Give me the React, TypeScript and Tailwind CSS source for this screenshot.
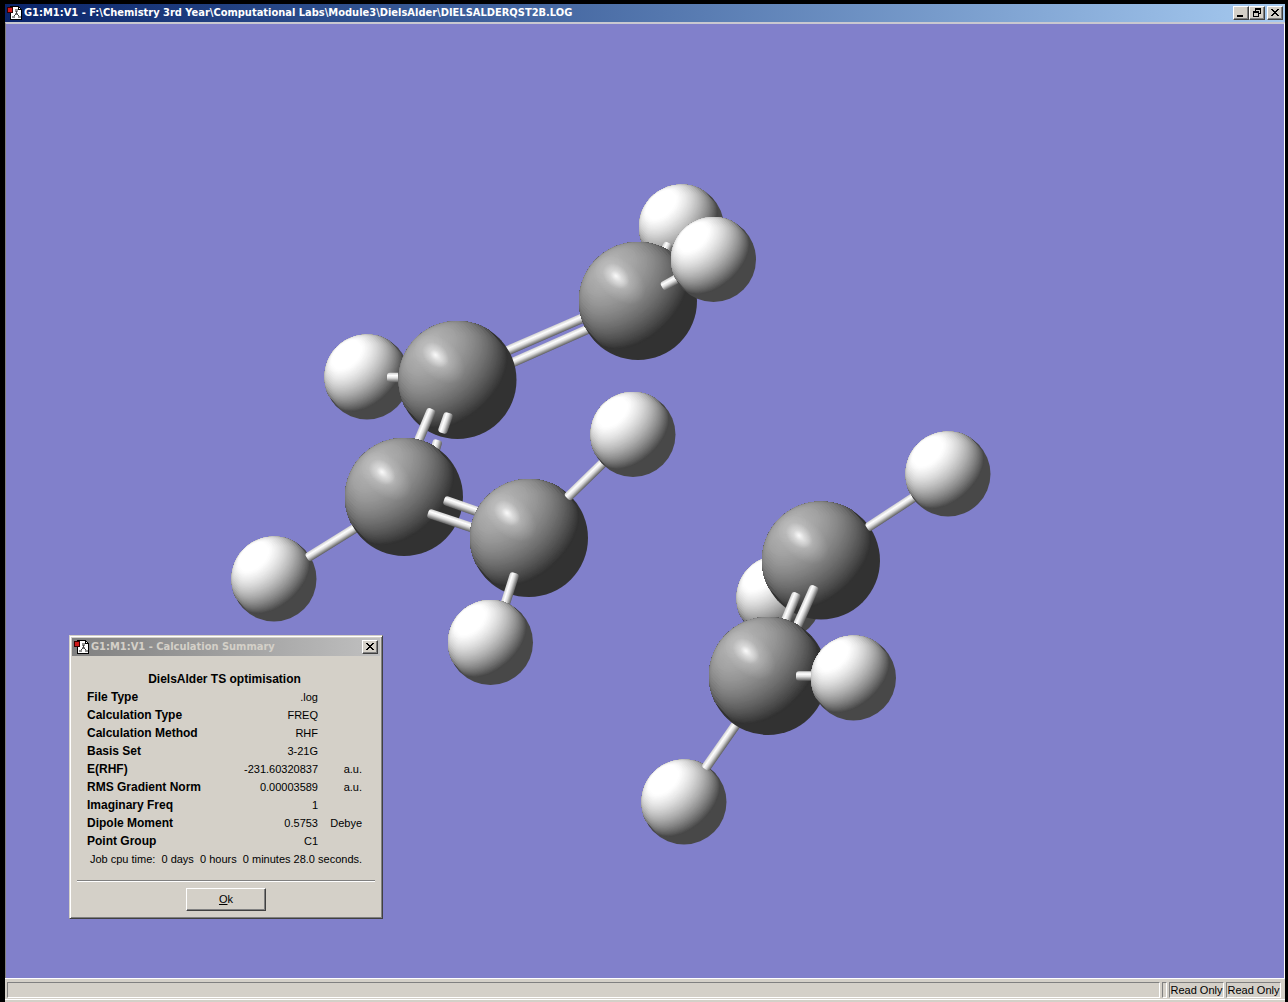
const results = [
  { label: "File Type", value: ".log", unit: "" },
  { label: "Calculation Type", value: "FREQ", unit: "" },
  { label: "Calculation Method", value: "RHF", unit: "" },
  { label: "Basis Set", value: "3-21G", unit: "" },
  { label: "E(RHF)", value: "-231.60320837", unit: "a.u." },
  { label: "RMS Gradient Norm", value: "0.00003589", unit: "a.u." },
  { label: "Imaginary Freq", value: "1", unit: "" },
  { label: "Dipole Moment", value: "0.5753", unit: "Debye" },
  { label: "Point Group", value: "C1", unit: "" },
];

// Unit vector pointing at the light: sideways and towards the viewer
const LIGHT_SIDE = 0.78;
const LIGHT_FRONT = 0.62;
const LEVELS = 60;

// Outline of the part of a unit sphere that is lit at least as much as `level`
const litArea = (level: number) => {
  const near: string[] = [];
  const far: string[] = [];
  for (let v = -1; v <= 1.0001; v += 0.04) {
    const half = Math.sqrt(Math.max(0, 1 - v * v));
    let first: number | null = null;
    let last = 0;
    for (let i = 0; i <= 200; i++) {
      const u = -half + (2 * half * i) / 200;
      const depth = Math.sqrt(Math.max(0, half * half - u * u));
      if (u * LIGHT_SIDE + depth * LIGHT_FRONT >= level) {
        if (first === null) first = u;
        last = u;
      }
    }
    if (first === null) continue;
    near.push(`${first.toFixed(3)},${v.toFixed(3)}`);
    far.unshift(`${last.toFixed(3)},${v.toFixed(3)}`);
  }
  return [...near, ...far].join(" ");
};

const areas = Array.from({ length: LEVELS }, (_, i) => ({
  level: i / LEVELS,
  points: litArea(i / LEVELS),
}));

const Ball = ({ id, ambient, diffuse }: { id: string; ambient: number; diffuse: number }) => (
  <g id={id}>
    <circle r="1" fill={`rgb(${ambient},${ambient},${ambient})`} />
    <g transform="rotate(-132.5)">
      {areas.map(({ level, points }) => {
        const tone = Math.min(255, Math.round(ambient + diffuse * level));
        return <polygon key={level} points={points} fill={`rgb(${tone},${tone},${tone})`} />;
      })}
    </g>
  </g>
);

const Carbon = ({ x, y }: { x: number; y: number }) => (
  <g transform={`translate(${x} ${y})`}>
    <use href="#carbon" transform="scale(59)" />
    <ellipse cx="-18" cy="-21" rx="30" ry="19" fill="url(#shine)" transform="rotate(42 -18 -21)" opacity="0.5" />
    <ellipse cx="-22" cy="-25" rx="15" ry="11" fill="url(#shine)" transform="rotate(42 -22 -25)" />
  </g>
);

const Hydrogen = ({ x, y }: { x: number; y: number }) => (
  <use href="#hydrogen" transform={`translate(${x} ${y}) scale(42.5)`} />
);

const Bond = ({ from, to }: { from: [number, number]; to: [number, number] }) => {
  const dx = to[0] - from[0];
  const dy = to[1] - from[1];
  const angle = (Math.atan2(dy, dx) * 180) / Math.PI;
  return (
    <rect
      x="0"
      y="-4.75"
      width={Math.hypot(dx, dy)}
      height="9.5"
      rx="3"
      fill="url(#rod)"
      transform={`translate(${from[0]} ${from[1]}) rotate(${angle})`}
    />
  );
};

const Molecule = () => (
  <svg
    viewBox="6 24 1278 954"
    preserveAspectRatio="xMinYMin meet"
    className="block h-full w-full"
    role="img"
    aria-label="Diels-Alder transition state"
  >
    <defs>
      <Ball id="carbon" ambient={50} diffuse={130} />
      <Ball id="hydrogen" ambient={72} diffuse={205} />
      <radialGradient id="shine">
        <stop offset="0" stopColor="#fff" stopOpacity="0.9" />
        <stop offset="0.4" stopColor="#fff" stopOpacity="0.38" />
        <stop offset="1" stopColor="#fff" stopOpacity="0" />
      </radialGradient>
      <linearGradient id="rod" x1="0" y1="0" x2="0" y2="1">
        <stop offset="0" stopColor="#d0d0d0" />
        <stop offset="0.3" stopColor="#fff" />
        <stop offset="0.55" stopColor="#dcdcdc" />
        <stop offset="1" stopColor="#5c5c5c" />
      </linearGradient>
    </defs>

    <Bond from={[500, 354]} to={[590, 315]} />
    <Bond from={[505, 366]} to={[595, 326]} />
    <Hydrogen x={681.5} y={227} />
    <Bond from={[662, 257]} to={[669, 243]} />
    <Carbon x={638} y={301} />
    <Bond from={[662, 287]} to={[682, 276]} />
    <Hydrogen x={713.5} y={259.5} />

    <Hydrogen x={367} y={377} />
    <Bond from={[387, 377.5]} to={[410, 377.5]} />
    <Carbon x={457.5} y={380} />
    <Bond from={[415, 449]} to={[432, 409]} />
    <Bond from={[442, 433]} to={[449, 413]} />
    <Bond from={[434, 454]} to={[438, 440]} />
    <Hydrogen x={274} y={579} />
    <Bond from={[307, 558]} to={[362, 524]} />
    <Carbon x={404} y={497} />
    <Bond from={[444, 500]} to={[490, 516]} />
    <Bond from={[428, 513]} to={[485, 532]} />
    <Carbon x={529} y={538} />
    <Bond from={[567, 498]} to={[608, 458]} />
    <Hydrogen x={633} y={434.5} />
    <Bond from={[503, 611]} to={[515, 573]} />
    <Hydrogen x={490.5} y={642.5} />

    <Hydrogen x={779} y={598} />
    <Carbon x={821} y={560.5} />
    <Bond from={[867, 528]} to={[922, 492]} />
    <Hydrogen x={948} y={474} />
    <Bond from={[783, 627]} to={[797, 593]} />
    <Bond from={[795, 631]} to={[815, 586]} />
    <Hydrogen x={684} y={802} />
    <Bond from={[705, 769]} to={[742, 716]} />
    <Carbon x={768} y={676} />
    <Bond from={[796, 676]} to={[820, 676]} />
    <Hydrogen x={853.5} y={678} />
  </svg>
);

const AppIcon = () => (
  <svg viewBox="0 0 16 16" className="h-4 w-4 shrink-0" shapeRendering="crispEdges" aria-hidden="true">
    <path d="M3 1h9v1h1v1h1v1h1v11H3z" fill="#000" />
    <path d="M4 2h7v3h3v9H4z" fill="#fff" />
    <path d="M12 3h1v1h-1z" fill="#fff" />
    <path d="M8 4h3v3H8zM8 8h3v2H8zM5 11h3v2H5zM11 11h3v2h-3z" fill="#909090" />
    <path d="M9 6h1v3H9zM8 9h1v1H8zM7 10h1v1H7zM10 9h1v1h-1zM11 10h1v1h-1z" fill="#404040" />
    <path d="M0 2h6v6H0z" fill="#300" />
    <path d="M1 3h4v4H1z" fill="#d01818" />
  </svg>
);

const bevel =
  "border border-t-white border-l-white border-b-[#404040] border-r-[#404040] shadow-[inset_-1px_-1px_0_#808080]";

const sunken = "border border-t-[#808080] border-r-white border-b-white border-l-[#808080]";

const CaptionButton = ({ label, path }: { label: string; path: string }) => (
  <button type="button" aria-label={label} className={`flex h-[14px] w-4 items-center justify-center bg-[#d4d0c8] ${bevel}`}>
    <svg viewBox="0 0 14 12" className="h-3 w-[14px] shrink-0" shapeRendering="crispEdges" aria-hidden="true">
      <path d={path} fill="#000" />
    </svg>
  </button>
);

const CLOSE =
  "M3 2h2v1H3zM9 2h2v1H9zM4 3h2v1H4zM8 3h2v1H8zM5 4h4v1H5zM6 5h2v1H6zM5 6h4v1H5zM4 7h2v1H4zM8 7h2v1H8zM3 8h2v1H3zM9 8h2v1H9z";
const MINIMIZE = "M3 8h6v2H3z";
const RESTORE = "M5 1h6v2H5zM5 3h1v1H5zM10 3h1v4h-1zM9 6h1v1H9zM3 4h6v2H3zM3 6h1v4H3zM8 6h1v4H8zM3 9h6v1H3z";

const SummaryDialog = () => (
  <section
    role="dialog"
    aria-label="Calculation Summary"
    className="absolute top-[611px] left-[63px] w-[314px] border border-t-[#d4d0c8] border-l-[#d4d0c8] border-b-[#404040] border-r-[#404040] bg-[#d4d0c8] pb-[7px] shadow-[inset_1px_1px_0_#fff,inset_-1px_-1px_0_#808080]"
  >
    <header className="mx-[2px] mt-[2px] flex h-[18px] items-center bg-linear-to-r from-[#808080] to-[#c0c0c0] pr-[2px] pl-[2px]">
      <AppIcon />
      <h2 className="flex-1 pl-px font-['DejaVu_Sans_Condensed','DejaVu_Sans',sans-serif] text-[11px] leading-4 font-bold text-[#d4d0c8]">
        G1:M1:V1 - Calculation Summary
      </h2>
      <CaptionButton label="Close" path={CLOSE} />
    </header>
    <table className="mt-[14px] mr-[20px] ml-[17px] w-[275px] leading-[18px]">
      <caption className="text-[12px] font-bold">DielsAlder TS optimisation</caption>
      <tbody>
        {results.map((row) => (
          <tr key={row.label}>
            <th scope="row" className="p-0 text-left text-[12px] font-bold whitespace-nowrap">
              {row.label}
            </th>
            <td className="p-0 text-right">{row.value}</td>
            <td className="w-11 p-0 text-right">{row.unit}</td>
          </tr>
        ))}
      </tbody>
    </table>
    <p className="text-center leading-[18px] whitespace-pre">
      Job cpu time:{"  "}0 days{"  "}0 hours{"  "}0 minutes 28.0 seconds.
    </p>
    <hr className="mx-[7px] mt-3 h-[2px] border-t border-b border-t-[#808080] border-b-white" />
    <button type="button" className={`mx-auto mt-[6px] block h-[23px] w-20 ${bevel}`}>
      <u>O</u>k
    </button>
  </section>
);

const App = () => {
  return (
    <div className="flex h-screen flex-col bg-black pt-1 pr-[3px] pl-[5px] font-['Liberation_Sans',Arial,sans-serif] text-[11px] text-black">
      <header className="flex h-[18px] shrink-0 items-center bg-linear-to-r from-[#0a246a] to-[#a6caf0] pr-[2px] pl-[2px]">
        <AppIcon />
        <h1 className="flex-1 pl-px font-['DejaVu_Sans_Condensed','DejaVu_Sans',sans-serif] text-[11px] leading-4 font-bold whitespace-nowrap text-white">
          G1:M1:V1 - F:\Chemistry 3rd Year\Computational Labs\Module3\DielsAlder\DIELSALDERQST2B.LOG
        </h1>
        <CaptionButton label="Minimize" path={MINIMIZE} />
        <CaptionButton label="Restore" path={RESTORE} />
        <div className="ml-[2px]">
          <CaptionButton label="Close" path={CLOSE} />
        </div>
      </header>
      <main className="relative min-h-0 flex-1 border-t-2 border-r border-l border-t-[#c8c8d0] border-r-white border-l-[#808080] bg-[#8180cb]">
        <Molecule />
        <SummaryDialog />
      </main>
      <footer className="flex h-6 shrink-0 gap-[2px] border-t border-white bg-[#d4d0c8] pt-[3px] pr-1 pb-1 pl-[2px] shadow-[inset_0_-2px_0_#d4d0c8,inset_0_-3px_0_#fff]">
        <div className={`flex-1 ${sunken}`} />
        <div className={`w-[5px] ${sunken}`} />
        <div className={`w-[55px] text-center leading-[14px] whitespace-nowrap ${sunken}`}>Read Only</div>
        <div className={`w-[55px] text-center leading-[14px] whitespace-nowrap ${sunken}`}>Read Only</div>
      </footer>
    </div>
  );
};

export default App;
